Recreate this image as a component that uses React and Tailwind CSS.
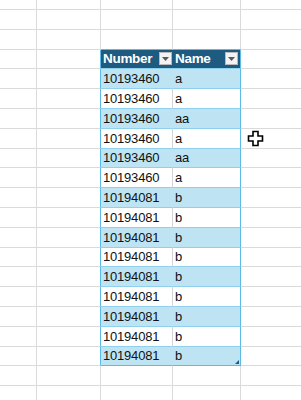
const rows = [
  ['10193460', 'a'],
  ['10193460', 'a'],
  ['10193460', 'aa'],
  ['10193460', 'a'],
  ['10193460', 'aa'],
  ['10193460', 'a'],
  ['10194081', 'b'],
  ['10194081', 'b'],
  ['10194081', 'b'],
  ['10194081', 'b'],
  ['10194081', 'b'],
  ['10194081', 'b'],
  ['10194081', 'b'],
  ['10194081', 'b'],
  ['10194081', 'b'],
];

function FilterButton() {
  return (
    <span className="w-[13px] h-[13px] bg-[#f3f3f3] border border-[#b9b9b9] flex items-center justify-center">
      <svg width="7" height="4" viewBox="0 0 7 4">
        <path d="M0 0h7L3.5 4z" fill="#595959" />
      </svg>
    </span>
  );
}

function BlankRow({ h = 'h-[19.8px]', topOfTable = false }) {
  return (
    <div className={`flex ${h}`}>
      <div className="w-[37px] shrink-0 border-r border-b border-[#dadada]" />
      <div className="w-[64px] shrink-0 border-r border-b border-[#dadada]" />
      <div className={`w-[72px] shrink-0 border-r border-b border-r-[#dadada] ${topOfTable ? 'border-b-[#5cbbe6]' : 'border-b-[#dadada]'}`} />
      <div className={`w-[68px] shrink-0 border-r border-b border-r-[#dadada] ${topOfTable ? 'border-b-[#5cbbe6]' : 'border-b-[#dadada]'}`} />
      <div className="flex-1 border-b border-[#dadada]" />
    </div>
  );
}

function TableRow({ children, band, header, last }) {
  const fill = header ? 'bg-[#1d5b80]' : band ? 'bg-[#bee4f4]' : 'bg-white';
  const inner = header ? 'border-r-[#1d5b80]' : band ? 'border-r-[#bee4f4]' : 'border-r-[#d4d4d4]';
  const sep = last ? 'border-b-[#5cbbe6]' : 'border-b-[#8fd0ee]';
  return (
    <div className="flex h-[19.8px]">
      <div className="w-[37px] shrink-0 border-r border-b border-[#dadada]" />
      <div className="w-[64px] shrink-0 border-r border-b border-b-[#dadada] border-r-[#5cbbe6]" />
      {children({ fill, inner, sep })}
      <div className="flex-1 border-b border-[#dadada]" />
    </div>
  );
}

export default function App() {
  return (
    <div className="relative w-[301px] h-[400px] overflow-hidden bg-white text-[#111] text-[13px] tracking-[-0.2px] leading-none" style={{ fontFamily: '"Liberation Sans", Arial, sans-serif' }}>
      <BlankRow h="h-[10px]" />
      <BlankRow />
      <BlankRow topOfTable />
      <TableRow header>
        {({ fill, sep }) => (
          <>
            <div className={`w-[72px] shrink-0 ${fill} border-b ${sep} flex items-center pl-[2px] pr-[1px] text-white font-bold text-[13.5px] tracking-[-0.3px]`}>
              <span className="flex-1">Number</span>
              <FilterButton />
            </div>
            <div className={`w-[68px] shrink-0 ${fill} border-r border-r-[#5cbbe6] border-b ${sep} flex items-center pl-[2px] pr-[2px] text-white font-bold text-[13.5px] tracking-[-0.3px]`}>
              <span className="flex-1">Name</span>
              <FilterButton />
            </div>
          </>
        )}
      </TableRow>
      {rows.map(([num, name], i) => {
        const last = i === rows.length - 1;
        return (
          <TableRow key={i} band={i % 2 === 0} last={last}>
            {({ fill, inner, sep }) => (
              <>
                <div className={`w-[72px] shrink-0 ${fill} border-r ${inner} border-b ${sep} flex items-center pl-[2px]`}>
                  {num}
                </div>
                <div className={`relative w-[68px] shrink-0 ${fill} border-r border-r-[#5cbbe6] border-b ${sep} flex items-center pl-[2px]`}>
                  {name}
                  {last && (
                    <svg className="absolute right-[1px] bottom-[1px]" width="4" height="4" viewBox="0 0 4 4">
                      <path d="M4 0v4H0z" fill="#1d5b80" />
                    </svg>
                  )}
                </div>
              </>
            )}
          </TableRow>
        );
      })}
      <BlankRow />
      <BlankRow />

      <svg className="absolute left-[247px] top-[130px]" width="17" height="17" viewBox="0 0 17 17">
        <path
          d="M6 1.5h5v4.5h4.5v5h-4.5v4.5h-5v-4.5h-4.5v-5h4.5z"
          fill="white"
          stroke="black"
          strokeWidth="1.6"
          strokeLinejoin="miter"
        />
      </svg>
    </div>
  );
}
